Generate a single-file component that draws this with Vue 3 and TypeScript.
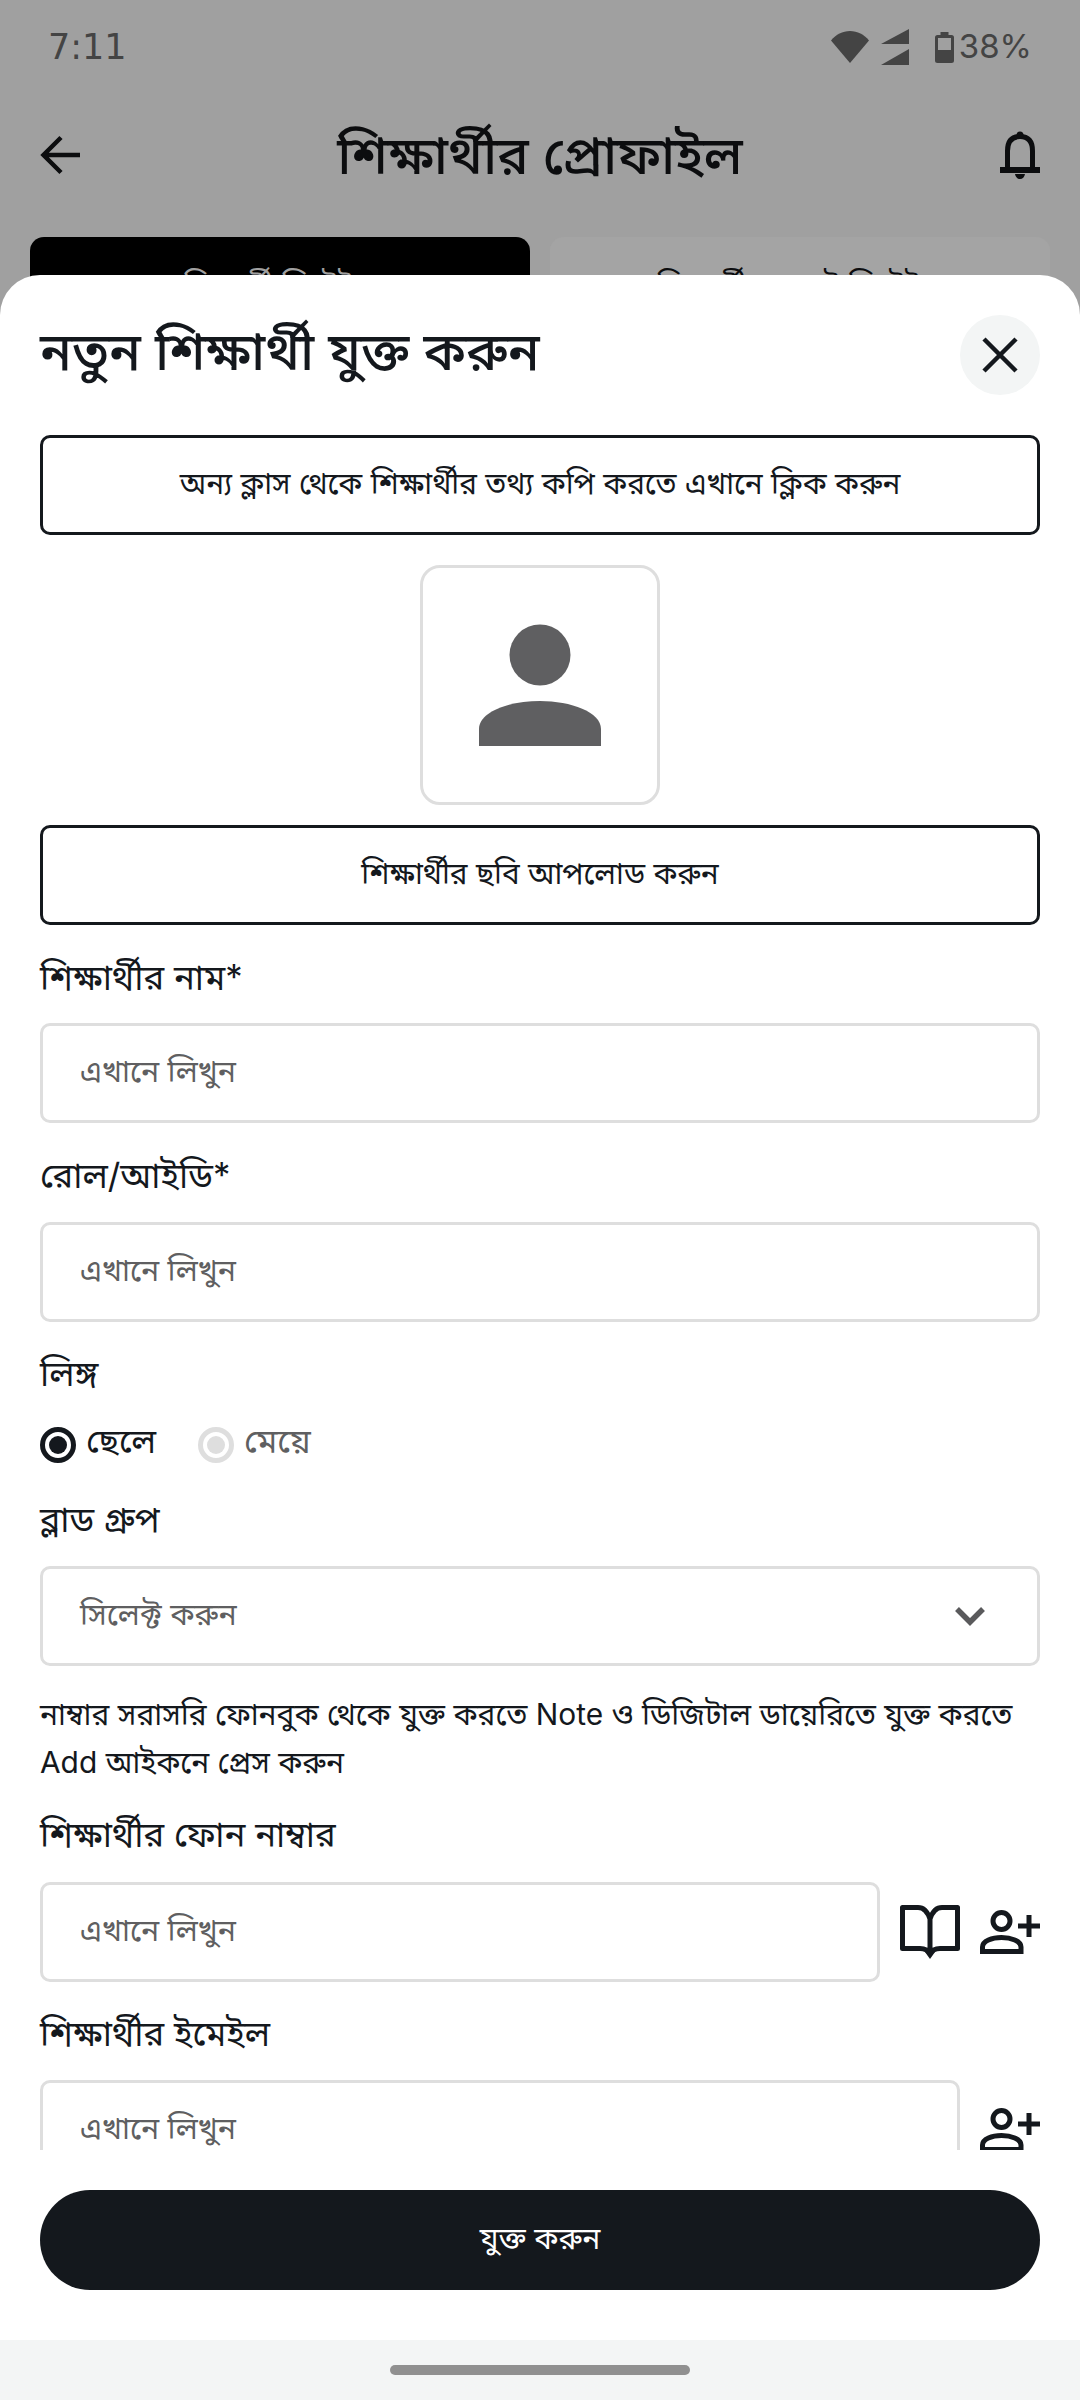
<script setup lang="ts">
const placeholder = "এখানে লিখুন";
</script>

<template>
  <div class="screen">
    <div class="page">
      <div class="status">
        <span class="time">7:11</span>
        <div class="status-right">
          <svg class="wifi" width="38" height="32" viewBox="0 0 38 32"><path d="M0 9.500C5 3.500 11.500 0 19 0S33 3.500 38 9.500L19 32Z" fill="#444" /></svg>
          <svg class="signal" width="28" height="36" viewBox="0 0 28 36"><path d="M28 0V15H0ZM28 20V36H0Z" fill="#444" /></svg>
          <svg class="battery" width="19" height="31" viewBox="0 0 19 31"><path d="M5.500 0h8v3h3A2.500 2.500 0 0 1 19 5.500V28.500A2.500 2.500 0 0 1 16.500 31H2.500A2.500 2.500 0 0 1 0 28.500V5.500A2.500 2.500 0 0 1 2.500 3H5.500ZM3 6V18H16V6Z" fill="#444" fill-rule="evenodd" /></svg>
          <span class="percent">38%</span>
        </div>
      </div>
      <div class="topbar">
        <svg width="40" height="40" viewBox="0 0 40 40" fill="none" stroke="#0c0d0f" stroke-width="4.500"><path d="M40 20H4M21 2.500 3.500 20 21 37.500" /></svg>
        <span class="page-title">শিক্ষার্থীর প্রোফাইল</span>
        <svg class="bell" width="40" height="50" viewBox="0 0 40 50" fill="none"><path d="M7.500 38V21C7.500 11 12 6.500 20 6.500S32.500 11 32.500 21V38" stroke="#0c0d0f" stroke-width="5" /><path d="M0 37h40v6H0ZM15 44h10c-.5 3-2.500 5-5 5s-4.500-2-5-5ZM16.500 5a3.500 3.500 0 0 1 7 0v2h-7Z" fill="#0c0d0f" /></svg>
      </div>
      <div class="tabs">
        <div class="tab active">শিক্ষার্থী ডিটেইল</div>
        <div class="tab">শিক্ষার্থী পেমেন্ট ডিটেইল</div>
      </div>
    </div>

    <div class="sheet">
      <div class="sheet-head">
        <h1>নতুন শিক্ষার্থী যুক্ত করুন</h1>
        <button class="close">
          <svg width="36" height="36" viewBox="0 0 36 36" stroke="#14181d" stroke-width="4.500" fill="none"><path d="M2 2 34 34M34 2 2 34" /></svg>
        </button>
      </div>
      <div class="scroll">
        <button class="outline">অন্য ক্লাস থেকে শিক্ষার্থীর তথ্য কপি করতে এখানে ক্লিক করুন</button>
        <div class="avatar">
          <svg width="122" height="122" viewBox="0 0 122 122"><circle cx="61" cy="31" r="30.500" fill="#5f5f61" /><path d="M0 122V105C0 88 30 77 61 77S122 88 122 105V122Z" fill="#5f5f61" /></svg>
        </div>
        <button class="outline">শিক্ষার্থীর ছবি আপলোড করুন</button>

        <label class="label first">শিক্ষার্থীর নাম*</label>
        <div class="field">{{ placeholder }}</div>
        <label class="label">রোল/আইডি*</label>
        <div class="field">{{ placeholder }}</div>
        <label class="label gender">লিঙ্গ</label>
        <div class="radios">
          <span class="radio on"><i></i></span><span class="radio-text">ছেলে</span>
          <span class="radio off"><i></i></span><span class="radio-text muted">মেয়ে</span>
        </div>
        <label class="label blood">ব্লাড গ্রুপ</label>
        <div class="field select">
          <span>সিলেক্ট করুন</span>
          <svg width="30" height="19" viewBox="0 0 30 19" fill="none" stroke="#5a5a5c" stroke-width="5.500"><path d="M2 2 15 15 28 2" /></svg>
        </div>
        <p class="help">নাম্বার সরাসরি ফোনবুক থেকে যুক্ত করতে Note ও ডিজিটাল ডায়েরিতে যুক্ত করতে Add আইকনে প্রেস করুন</p>
        <label class="label phone">শিক্ষার্থীর ফোন নাম্বার</label>
        <div class="row">
          <div class="field grow">{{ placeholder }}</div>
          <svg width="60" height="54" viewBox="0 0 60 54" fill="none" stroke="#14181d" stroke-width="5"><path d="M30 14C28 8 25 2.500 18 2.500H2.500V43.500H20C25 43.500 28 45 30 49 32 45 35 43.500 40 43.500H57.500V2.500H42C35 2.500 32 8 30 14ZM30 14V49" stroke-linejoin="round" /><path d="M25 47h10l-5 7Z" fill="#14181d" stroke="none" /></svg>
          <svg class="adduser" width="60" height="44" viewBox="0 0 60 44" fill="none" stroke="#14181d" stroke-width="5"><circle cx="21.500" cy="11" r="8.500" /><path d="M2.500 41.500V37C2.500 31 12 27.500 21.500 27.500S41 31 41 37V41.500ZM38 16H60M49 5V27" /></svg>
        </div>
        <label class="label email">শিক্ষার্থীর ইমেইল</label>
        <div class="row">
          <div class="field grow">{{ placeholder }}</div>
          <svg class="adduser" width="60" height="44" viewBox="0 0 60 44" fill="none" stroke="#14181d" stroke-width="5"><circle cx="21.500" cy="11" r="8.500" /><path d="M2.500 41.500V37C2.500 31 12 27.500 21.500 27.500S41 31 41 37V41.500ZM38 16H60M49 5V27" /></svg>
        </div>
      </div>
      <div class="foot">
        <button class="submit">যুক্ত করুন</button>
      </div>
      <div class="navbar"><span></span></div>
    </div>
  </div>
</template>

<style scoped>
.screen {
  position: relative;
  width: 1080px;
  height: 2400px;
  overflow: hidden;
  background: #a0a0a0;
  font-family: Inter, "Noto Sans", "Noto Sans Bengali", "DejaVu Sans", sans-serif;
  color: #14181d;
}

.status {
  height: 92px;
  box-sizing: border-box;
  padding: 2px 48px 0;
  display: flex;
  align-items: center;
  justify-content: space-between;
  color: #444;
}

.time {
  font-family: "DejaVu Sans", sans-serif;
  font-size: 35px;
}

.status-right {
  display: flex;
  align-items: center;
}

.wifi {
  margin-right: 12px;
}

.signal {
  margin-right: 26px;
}

.percent {
  font-size: 33px;
  margin-left: 5px;
  padding-bottom: 2px;
}

.topbar {
  display: flex;
  align-items: center;
  justify-content: space-between;
  padding: 0 40px;
  height: 126px;
  color: #0c0d0f;
}

.page-title {
  font-size: 52.700px;
  font-weight: 500;
  padding-top: 8px;
}

.tabs {
  display: flex;
  gap: 20px;
  padding: 19px 30px 0;
}

.tab {
  flex: 1;
  height: 100px;
  border-radius: 14px;
  background: #a4a4a4;
  display: flex;
  align-items: center;
  justify-content: center;
  font-size: 30px;
  color: #0c0d0f;
}

.tab.active {
  background: #000;
  color: #a0a0a0;
}

.sheet {
  position: absolute;
  left: 0;
  right: 0;
  top: 275px;
  bottom: 0;
  background: #fff;
  border-radius: 40px 40px 0 0;
  display: flex;
  flex-direction: column;
  overflow: hidden;
}

.sheet-head {
  display: flex;
  align-items: center;
  justify-content: space-between;
  padding: 40px 40px 0;
  height: 120px;
  box-sizing: border-box;
  flex: none;
}

h1 {
  margin: 0;
  font-size: 52.500px;
  font-weight: 500;
}

.close {
  width: 80px;
  height: 80px;
  border: 0;
  border-radius: 50%;
  background: #f3f5f5;
  display: flex;
  align-items: center;
  justify-content: center;
  padding: 0;
}

.scroll {
  height: 1755px;
  flex: none;
  overflow: hidden;
  padding: 40px 40px 0;
  box-sizing: border-box;
  display: flex;
  flex-direction: column;
}

.outline {
  flex: none;
  height: 100px;
  border: 3px solid #14181d;
  border-radius: 10px;
  background: #fff;
  font: inherit;
  font-size: 29.700px;
  color: #14181d;
  padding: 0;
}

.avatar {
  flex: none;
  align-self: center;
  width: 240px;
  height: 240px;
  box-sizing: border-box;
  margin: 30px 0 20px;
  border: 3px solid #dedede;
  border-radius: 20px;
  display: flex;
  align-items: center;
  justify-content: center;
}

.label {
  display: block;
  flex: none;
  font-size: 34.700px;
  line-height: 46px;
  margin: 29px 0 24px;
}

.label.first {
  margin-top: 29px;
  margin-bottom: 23px;
}

.label.gender {
  margin-top: 28px;
  margin-bottom: 31px;
}

.label.blood {
  margin-top: 33px;
  margin-bottom: 24px;
}

.label.phone {
  margin-top: 25px;
  margin-bottom: 25px;
}

.label.email {
  margin-top: 28px;
}

.field {
  flex: none;
  height: 100px;
  box-sizing: border-box;
  border: 3px solid #dedede;
  border-radius: 10px;
  display: flex;
  align-items: center;
  padding: 0 37px;
  font-size: 30.200px;
  color: #5f5f61;
}

.radios {
  display: flex;
  flex: none;
  align-items: center;
  height: 36px;
  font-size: 34px;
}

.radio {
  width: 36px;
  height: 36px;
  box-sizing: border-box;
  border-radius: 50%;
  border: 5px solid #14181d;
  display: flex;
  align-items: center;
  justify-content: center;
}

.radio i {
  width: 18px;
  height: 18px;
  border-radius: 50%;
  background: #14181d;
}

.radio.off {
  border-color: #dedede;
  margin-left: 42px;
}

.radio.off i {
  background: #dedede;
}

.radio-text {
  margin-left: 10px;
  padding-bottom: 4px;
}

.muted {
  color: #5f5f61;
}

.select {
  justify-content: space-between;
  padding-right: 52px;
}

.help {
  flex: none;
  margin: 24px 0 0;
  font-size: 29.900px;
  line-height: 48px;
}

.row {
  display: flex;
  flex: none;
  align-items: center;
}

.grow {
  flex: 1;
}

.row > svg {
  flex: none;
  margin-left: 20px;
}

.foot {
  flex: none;
  height: 190px;
  padding: 40px 40px 0;
  box-sizing: border-box;
}

.submit {
  width: 100%;
  height: 100px;
  border: 0;
  border-radius: 50px;
  background: #14181d;
  color: #fff;
  font: inherit;
  font-size: 30px;
  padding: 0;
}

.navbar {
  flex: 1;
  background: #f3f5f5;
  display: flex;
  justify-content: center;
  padding-top: 25px;
}

.navbar span {
  width: 300px;
  height: 10px;
  border-radius: 5px;
  background: #909090;
}
</style>
